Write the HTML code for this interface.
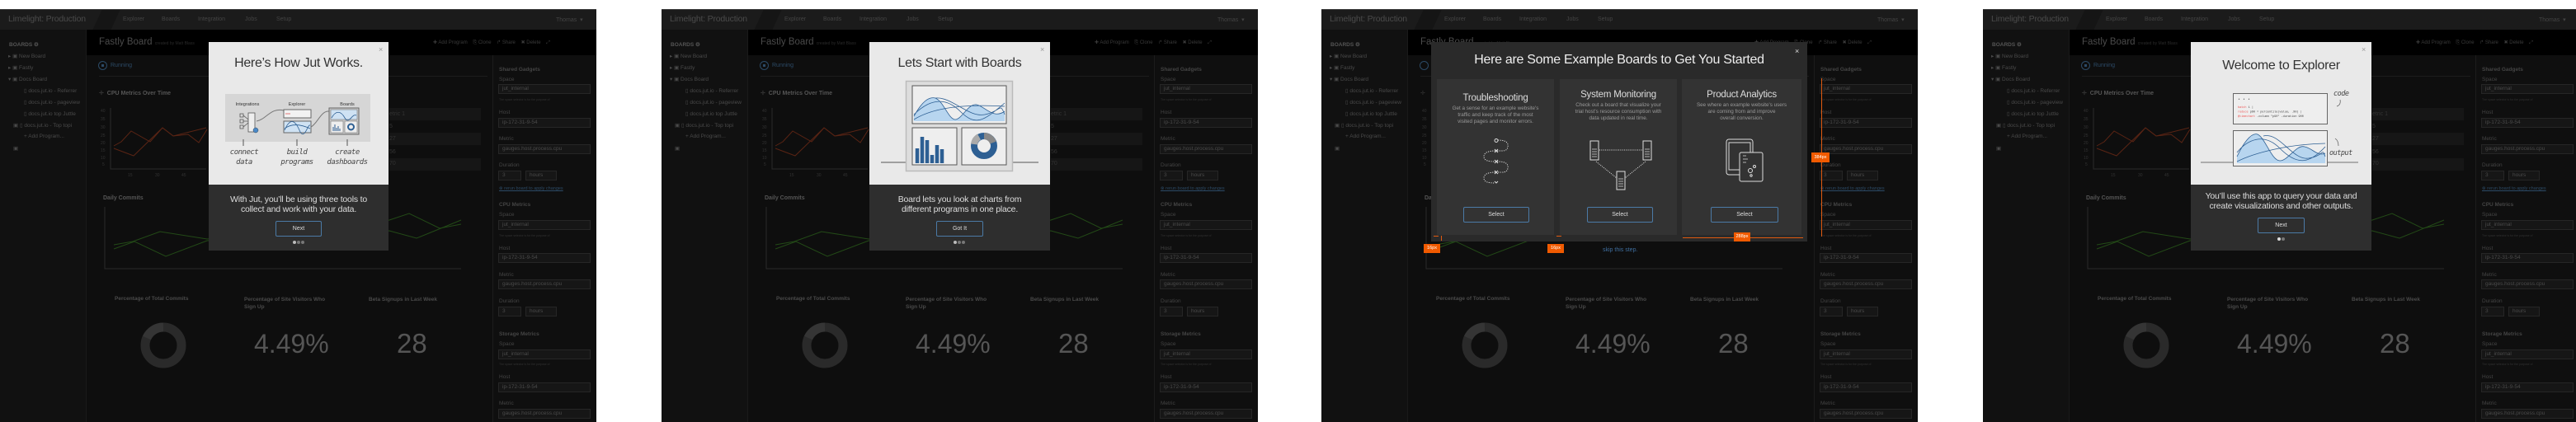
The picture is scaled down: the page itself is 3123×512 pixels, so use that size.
<!DOCTYPE html>
<html><head><meta charset="utf-8">
<style>
*{margin:0;padding:0;box-sizing:border-box}
body{width:3123px;height:512px;background:#fff;position:relative;overflow:hidden;font-family:"Liberation Sans",sans-serif}
.p{position:absolute;top:0;width:723px;height:512px;overflow:hidden}
.a{position:absolute;white-space:nowrap}
.nav{left:0;top:11px;width:723px;height:25px;background:#1b1b1b;border-top:1px solid #3a3a3a}
.side{left:0;top:36px;width:105px;height:476px;background:#111;border-right:1px solid #1a1a1a}
.hdr{left:105px;top:36px;width:618px;height:31px;background:#000}
.main{left:105px;top:67px;width:493px;height:445px;background:#0e0e0e}
.rp{left:597px;top:67px;width:126px;height:445px;background:#0f0f0f;border-left:1px solid #1c1c1c}
.nl{font-size:7px;color:#444;top:20px}
.sb{font-size:6.5px;color:#4a4a4a}
.lab{font-size:6.5px;color:#444;left:605px}
.sel{left:604px;width:112px;height:12px;background:#161616;border:1px solid #262626;font-size:6.5px;color:#4a4a4a;padding-left:4px;line-height:10px}
.hint{font-size:3.5px;color:#333;left:605px}
.row{left:472px;width:111px;height:15px;background:#161616}
.m{position:absolute;overflow:hidden}
.btn{position:absolute;border:1px solid #4b7aa6;border-radius:2px;color:#ddd;font-size:7px;text-align:center}
.dot{position:absolute;width:4px;height:4px;border-radius:2px;background:#777}
.ttl{font-size:16px;color:#333;letter-spacing:-0.3px;text-align:center}
.dk{font-size:10.5px;line-height:12px;color:#ddd;text-align:center;letter-spacing:-0.2px}
.lt{font-size:10.5px;color:#4a4a4a;top:17px;left:10px;letter-spacing:-0.2px}
.fb{left:120px;top:45px;font-size:11.5px;color:#4a4a4a}
.act{left:525px;top:48px;font-size:6px;color:#3a3a3a}
.bt{font-size:6.5px;color:#4a4a4a;font-weight:bold}
</style></head><body>

<!-- ================= PANEL 1 ================= -->
<div class="p" style="left:0">
<div class="a nav"></div>
<div class="a lt">Limelight: Production</div>
<div class="a" style="left:118px;top:12px;width:22px;height:24px;background:#151515;transform:skewX(-25deg)"></div>
<div class="a nl" style="left:149px">Explorer</div><div class="a nl" style="left:196px">Boards</div><div class="a nl" style="left:240px">Integration</div><div class="a nl" style="left:297px">Jobs</div><div class="a nl" style="left:335px">Setup</div>
<div class="a nl" style="left:674px">Thomas &nbsp;▾</div>
<div class="a side"></div>
<div class="a sb" style="left:11px;top:50px;color:#555;font-weight:bold">BOARDS ⚙</div>
<div class="a sb" style="left:10px;top:64px">▸ ▣ New Board</div>
<div class="a sb" style="left:10px;top:78px">▸ ▣ Fastly</div>
<div class="a sb" style="left:10px;top:92px">▾ ▣ Docs Board</div>
<div class="a sb" style="left:29px;top:106px">▯ docs.jut.io - Referrer</div>
<div class="a sb" style="left:29px;top:120px">▯ docs.jut.io - pageview</div>
<div class="a sb" style="left:29px;top:134px">▯ docs.jut.io top Juttle</div>
<div class="a sb" style="left:16px;top:148px">▣ ▯ docs.jut.io - Top topi</div>
<div class="a sb" style="left:29px;top:162px">+ Add Program...</div>
<div class="a sb" style="left:16px;top:176px">▣</div>
<div class="a hdr"></div>
<div class="a fb">Fastly Board <span style="font-size:5px;color:#2a2a2a">created by Matt Blass</span></div>
<div class="a act">✚ Add Program &nbsp;&nbsp; ⎘ Clone &nbsp;&nbsp; ↱ Share &nbsp;&nbsp; ✖ Delete &nbsp;&nbsp; ⤢</div>
<div class="a main"></div>
<div class="a rp"></div>
<div class="a" style="left:119px;top:74px;width:11px;height:11px;border:1px solid #2c4a66;border-radius:6px"></div>
<div class="a" style="left:123px;top:78px;width:3px;height:3px;background:#2c4a66"></div>
<div class="a" style="left:134px;top:76px;font-size:7px;color:#2c4a66">Running</div>
<div class="a" style="left:120px;top:92px;width:471px;height:1px;background:#1c1c1c"></div>
<div class="a bt" style="left:120px;top:109px;font-size:7px;color:#555"><span style="color:#333">✛</span> &nbsp;CPU Metrics Over Time</div>
<div class="a row" style="top:131px"></div><div class="a row" style="top:161px"></div><div class="a row" style="top:192px"></div>
<div class="a" style="left:472px;top:135px;font-size:7px;color:#333">etric 1</div>
<div class="a" style="left:472px;top:150px;font-size:7px;color:#333">5</div>
<div class="a" style="left:472px;top:165px;font-size:7px;color:#333">27</div>
<div class="a" style="left:472px;top:181px;font-size:7px;color:#333">56</div>
<div class="a" style="left:472px;top:195px;font-size:7px;color:#333">70</div>
<div class="a bt" style="left:125px;top:237px;font-size:7px;color:#555">Daily Commits</div>
<svg class="a" style="left:0;top:0" width="723" height="512">
<g font-size="5" fill="#333" font-family="Liberation Sans"><text x="122" y="136">40</text><text x="122" y="146">35</text><text x="122" y="156">30</text><text x="122" y="166">25</text><text x="122" y="175">20</text><text x="122" y="184">15</text><text x="122" y="193">10</text><text x="124" y="201">5</text><text x="155" y="214">15</text><text x="188" y="214">30</text><text x="220" y="214">45</text></g>
<path d="M134 131V205H250" stroke="#2a2a2a" fill="none"/>
<path d="M138 177L147 172L159 159L182 172L197 155L210 165L250 155" stroke="#5a2414" fill="none"/>
<path d="M138 180L162 189L197 155L210 165L228 163L241 173L251 157" stroke="#5a2414" fill="none"/>
<path d="M127 251V326H559" stroke="#2a2a2a" fill="none"/>
<path d="M138 297L161 293L194 281L251 290L472 267L496 259L533 277L559 272" stroke="#234a17" fill="none"/>
<path d="M138 302L163 293L201 311L251 292L472 280L505 289L559 267" stroke="#234a17" fill="none"/>
<circle cx="198" cy="419" r="22" stroke="#2a2a2a" stroke-width="11" fill="none"/>
<path d="M198 397A22 22 0 0 0 178 410" stroke="#353535" stroke-width="11" fill="none"/>
</svg>
<div class="a bt" style="left:139px;top:359px">Percentage of Total Commits</div>
<div class="a bt" style="left:296px;top:360px;line-height:8.5px">Percentage of Site Visitors Who<br>Sign Up</div>
<div class="a bt" style="left:447px;top:360px">Beta Signups in Last Week</div>
<div class="a" style="left:308px;top:399px;font-size:32px;color:#555">4.49%</div>
<div class="a" style="left:481px;top:398px;font-size:33px;color:#555">28</div>
<div class="a lab" style="top:81px;font-weight:bold">Shared Gadgets</div>
<div class="a lab" style="top:93px">Space</div><div class="a sel" style="top:102px">jut_internal</div><div class="a hint" style="top:119px">The space selector is for the purpose of</div>
<div class="a lab" style="top:133px">Host</div><div class="a sel" style="top:143px">ip-172-31-9-54</div>
<div class="a lab" style="top:165px">Metric</div><div class="a sel" style="top:175px">gauges.host.process.cpu</div>
<div class="a lab" style="top:197px">Duration</div><div class="a sel" style="top:207px;width:28px">3</div><div class="a sel" style="top:207px;left:637px;width:38px">hours</div>
<div class="a" style="left:605px;top:226px;font-size:5.5px;color:#2c4a66;text-decoration:underline">⊗ rerun board to apply changes</div>
<div class="a lab" style="top:245px;font-weight:bold">CPU Metrics</div>
<div class="a lab" style="top:257px">Space</div><div class="a sel" style="top:267px">jut_internal</div><div class="a hint" style="top:284px">The space selector is for the purpose of</div>
<div class="a lab" style="top:298px">Host</div><div class="a sel" style="top:307px">ip-172-31-9-54</div>
<div class="a lab" style="top:330px">Metric</div><div class="a sel" style="top:339px">gauges.host.process.cpu</div>
<div class="a lab" style="top:362px">Duration</div><div class="a sel" style="top:372px;width:28px">3</div><div class="a sel" style="top:372px;left:637px;width:38px">hours</div>
<div class="a lab" style="top:402px;font-weight:bold">Storage Metrics</div>
<div class="a lab" style="top:414px">Space</div><div class="a sel" style="top:424px">jut_internal</div><div class="a hint" style="top:440px">The space selector is for the purpose of</div>
<div class="a lab" style="top:454px">Host</div><div class="a sel" style="top:464px">ip-172-31-9-54</div>
<div class="a lab" style="top:486px">Metric</div><div class="a sel" style="top:496px">gauges.host.process.cpu</div>

<div class="m" style="left:253px;top:51px;width:218px;height:173px;background:#e9e9e9"></div>
<div class="m" style="left:253px;top:224px;width:218px;height:80px;background:#2e2e2e"></div>
<div class="a" style="left:459px;top:55px;font-size:9px;color:#999">×</div>
<div class="a ttl" style="left:253px;top:68px;width:218px">Here’s How Jut Works.</div>
<svg class="a" style="left:253px;top:100px" width="218" height="110">
<rect x="20" y="14" width="176" height="58" fill="#d6d6d6"/>
<g font-size="5.5" fill="#333" text-anchor="middle" font-family="Liberation Sans"><text x="47" y="28">Integrations</text><text x="107" y="28">Explorer</text><text x="168" y="28">Boards</text></g>
<path d="M38 38h4v4h-4zM38 45h4v4h-4zM38 52h4v4h-4zM42 40l6 5M42 47h6M42 54l6-5" stroke="#555" fill="none" stroke-width=".8"/>
<rect x="48" y="37" width="8" height="23" fill="#eee" stroke="#555" stroke-width=".8"/>
<circle cx="57" cy="58" r="3" fill="#4a8ac9" stroke="#345" stroke-width=".5"/>
<path d="M58 47C70 45 75 30 91 34" stroke="#777" fill="none"/>
<rect x="91" y="33" width="33" height="10" fill="#f2f2f2" stroke="#666"/>
<path d="M93 38h6" stroke="#d55" stroke-width=".8"/>
<rect x="91" y="47" width="33" height="14" fill="#cfe2f3" stroke="#666"/>
<path d="M92 58C98 44 104 44 110 58S120 50 123 52M92 56C100 50 110 50 123 56" stroke="#2d5f93" fill="none" stroke-width=".8"/>
<path d="M124 54C132 50 136 34 146 35" stroke="#777" fill="none"/>
<rect x="146" y="31" width="36" height="32" fill="#ccc" stroke="#666"/>
<rect x="148" y="33" width="32" height="12" fill="#cfe2f3" stroke="#777" stroke-width=".6"/>
<path d="M149 43C154 34 160 34 165 43S174 37 179 40" stroke="#2d5f93" fill="none" stroke-width=".8"/>
<rect x="148" y="47" width="15" height="14" fill="#eee" stroke="#777" stroke-width=".6"/>
<rect x="165" y="47" width="15" height="14" fill="#eee" stroke="#777" stroke-width=".6"/>
<path d="M151 59v-5M153 59v-8M155 59v-4M157 59v-6M159 59v-3" stroke="#2d5f93"/>
<circle cx="172.5" cy="54" r="3.5" stroke="#2d5f93" stroke-width="2" fill="none"/>
<path d="M42 69v8M107 69v8M168 69v8" stroke="#555"/>
<g font-size="9" fill="#444" text-anchor="middle" font-family="DejaVu Sans Mono,monospace" font-style="italic" letter-spacing="-0.5"><text x="43" y="87">connect</text><text x="43" y="99">data</text><text x="107" y="87">build</text><text x="107" y="99">programs</text><text x="168" y="87">create</text><text x="168" y="99">dashboards</text></g>
</svg>
<div class="a dk" style="left:253px;top:236px;width:218px">With Jut, you’ll be using three tools to<br>collect and work with your data.</div>
<div class="btn" style="left:334px;top:268px;width:56px;height:19px;line-height:17px">Next</div>
<div class="dot" style="left:355px;top:292px;background:#bbb"></div><div class="dot" style="left:360px;top:292px"></div><div class="dot" style="left:365px;top:292px"></div>
</div>

<!-- ================= PANEL 2 ================= -->
<div class="p" style="left:802px">
<div class="a nav"></div>
<div class="a lt">Limelight: Production</div>
<div class="a" style="left:118px;top:12px;width:22px;height:24px;background:#151515;transform:skewX(-25deg)"></div>
<div class="a nl" style="left:149px">Explorer</div><div class="a nl" style="left:196px">Boards</div><div class="a nl" style="left:240px">Integration</div><div class="a nl" style="left:297px">Jobs</div><div class="a nl" style="left:335px">Setup</div>
<div class="a nl" style="left:674px">Thomas &nbsp;▾</div>
<div class="a side"></div>
<div class="a sb" style="left:11px;top:50px;color:#555;font-weight:bold">BOARDS ⚙</div>
<div class="a sb" style="left:10px;top:64px">▸ ▣ New Board</div>
<div class="a sb" style="left:10px;top:78px">▸ ▣ Fastly</div>
<div class="a sb" style="left:10px;top:92px">▾ ▣ Docs Board</div>
<div class="a sb" style="left:29px;top:106px">▯ docs.jut.io - Referrer</div>
<div class="a sb" style="left:29px;top:120px">▯ docs.jut.io - pageview</div>
<div class="a sb" style="left:29px;top:134px">▯ docs.jut.io top Juttle</div>
<div class="a sb" style="left:16px;top:148px">▣ ▯ docs.jut.io - Top topi</div>
<div class="a sb" style="left:29px;top:162px">+ Add Program...</div>
<div class="a sb" style="left:16px;top:176px">▣</div>
<div class="a hdr"></div>
<div class="a fb">Fastly Board <span style="font-size:5px;color:#2a2a2a">created by Matt Blass</span></div>
<div class="a act">✚ Add Program &nbsp;&nbsp; ⎘ Clone &nbsp;&nbsp; ↱ Share &nbsp;&nbsp; ✖ Delete &nbsp;&nbsp; ⤢</div>
<div class="a main"></div>
<div class="a rp"></div>
<div class="a" style="left:119px;top:74px;width:11px;height:11px;border:1px solid #2c4a66;border-radius:6px"></div>
<div class="a" style="left:123px;top:78px;width:3px;height:3px;background:#2c4a66"></div>
<div class="a" style="left:134px;top:76px;font-size:7px;color:#2c4a66">Running</div>
<div class="a" style="left:120px;top:92px;width:471px;height:1px;background:#1c1c1c"></div>
<div class="a bt" style="left:120px;top:109px;font-size:7px;color:#555"><span style="color:#333">✛</span> &nbsp;CPU Metrics Over Time</div>
<div class="a row" style="top:131px"></div><div class="a row" style="top:161px"></div><div class="a row" style="top:192px"></div>
<div class="a" style="left:472px;top:135px;font-size:7px;color:#333">etric 1</div>
<div class="a" style="left:472px;top:150px;font-size:7px;color:#333">5</div>
<div class="a" style="left:472px;top:165px;font-size:7px;color:#333">27</div>
<div class="a" style="left:472px;top:181px;font-size:7px;color:#333">56</div>
<div class="a" style="left:472px;top:195px;font-size:7px;color:#333">70</div>
<div class="a bt" style="left:125px;top:237px;font-size:7px;color:#555">Daily Commits</div>
<svg class="a" style="left:0;top:0" width="723" height="512">
<g font-size="5" fill="#333" font-family="Liberation Sans"><text x="122" y="136">40</text><text x="122" y="146">35</text><text x="122" y="156">30</text><text x="122" y="166">25</text><text x="122" y="175">20</text><text x="122" y="184">15</text><text x="122" y="193">10</text><text x="124" y="201">5</text><text x="155" y="214">15</text><text x="188" y="214">30</text><text x="220" y="214">45</text></g>
<path d="M134 131V205H250" stroke="#2a2a2a" fill="none"/>
<path d="M138 177L147 172L159 159L182 172L197 155L210 165L250 155" stroke="#5a2414" fill="none"/>
<path d="M138 180L162 189L197 155L210 165L228 163L241 173L251 157" stroke="#5a2414" fill="none"/>
<path d="M127 251V326H559" stroke="#2a2a2a" fill="none"/>
<path d="M138 297L161 293L194 281L251 290L472 267L496 259L533 277L559 272" stroke="#234a17" fill="none"/>
<path d="M138 302L163 293L201 311L251 292L472 280L505 289L559 267" stroke="#234a17" fill="none"/>
<circle cx="198" cy="419" r="22" stroke="#2a2a2a" stroke-width="11" fill="none"/>
<path d="M198 397A22 22 0 0 0 178 410" stroke="#353535" stroke-width="11" fill="none"/>
</svg>
<div class="a bt" style="left:139px;top:359px">Percentage of Total Commits</div>
<div class="a bt" style="left:296px;top:360px;line-height:8.5px">Percentage of Site Visitors Who<br>Sign Up</div>
<div class="a bt" style="left:447px;top:360px">Beta Signups in Last Week</div>
<div class="a" style="left:308px;top:399px;font-size:32px;color:#555">4.49%</div>
<div class="a" style="left:481px;top:398px;font-size:33px;color:#555">28</div>
<div class="a lab" style="top:81px;font-weight:bold">Shared Gadgets</div>
<div class="a lab" style="top:93px">Space</div><div class="a sel" style="top:102px">jut_internal</div><div class="a hint" style="top:119px">The space selector is for the purpose of</div>
<div class="a lab" style="top:133px">Host</div><div class="a sel" style="top:143px">ip-172-31-9-54</div>
<div class="a lab" style="top:165px">Metric</div><div class="a sel" style="top:175px">gauges.host.process.cpu</div>
<div class="a lab" style="top:197px">Duration</div><div class="a sel" style="top:207px;width:28px">3</div><div class="a sel" style="top:207px;left:637px;width:38px">hours</div>
<div class="a" style="left:605px;top:226px;font-size:5.5px;color:#2c4a66;text-decoration:underline">⊗ rerun board to apply changes</div>
<div class="a lab" style="top:245px;font-weight:bold">CPU Metrics</div>
<div class="a lab" style="top:257px">Space</div><div class="a sel" style="top:267px">jut_internal</div><div class="a hint" style="top:284px">The space selector is for the purpose of</div>
<div class="a lab" style="top:298px">Host</div><div class="a sel" style="top:307px">ip-172-31-9-54</div>
<div class="a lab" style="top:330px">Metric</div><div class="a sel" style="top:339px">gauges.host.process.cpu</div>
<div class="a lab" style="top:362px">Duration</div><div class="a sel" style="top:372px;width:28px">3</div><div class="a sel" style="top:372px;left:637px;width:38px">hours</div>
<div class="a lab" style="top:402px;font-weight:bold">Storage Metrics</div>
<div class="a lab" style="top:414px">Space</div><div class="a sel" style="top:424px">jut_internal</div><div class="a hint" style="top:440px">The space selector is for the purpose of</div>
<div class="a lab" style="top:454px">Host</div><div class="a sel" style="top:464px">ip-172-31-9-54</div>
<div class="a lab" style="top:486px">Metric</div><div class="a sel" style="top:496px">gauges.host.process.cpu</div>

<div class="m" style="left:252px;top:51px;width:219px;height:173px;background:#e9e9e9"></div>
<div class="m" style="left:252px;top:224px;width:219px;height:80px;background:#2e2e2e"></div>
<div class="a" style="left:459px;top:55px;font-size:9px;color:#999">×</div>
<div class="a ttl" style="left:252px;top:68px;width:219px">Lets Start with Boards</div>
<svg class="a" style="left:252px;top:95px" width="219" height="120">
<path d="M14 102H45M173 102H205" stroke="#555" stroke-width="1"/>
<rect x="44.5" y="3.5" width="129" height="109" fill="#ddd" stroke="#bbb" stroke-width="1.5"/>
<rect x="52" y="9" width="114" height="46" fill="#eee" stroke="#555"/>
<path d="M54 52V46C64 28 72 22 80 24C90 28 96 50 104 50C112 50 120 30 130 32C140 34 150 50 164 40V52Z" fill="#b7d5ef"/>
<path d="M54 46C64 28 72 22 80 24C90 28 96 50 104 50C112 50 120 30 130 32C140 34 150 50 164 40M54 50C70 40 100 30 164 34M54 44C70 28 90 20 110 40S140 50 164 30M80 24C100 22 120 48 140 44S158 28 164 44" stroke="#2d5f93" fill="none" stroke-width=".8"/>
<rect x="52" y="60" width="54" height="45" fill="#eee" stroke="#555"/>
<rect x="112" y="60" width="54" height="45" fill="#eee" stroke="#555"/>
<path d="M58 103V85M64 103V71M70 103V75M76 103V93M82 103V81M88 103V86" stroke="#2d5f93" stroke-width="4.5"/>
<circle cx="139" cy="82" r="12" stroke="#2d5f93" stroke-width="8" fill="none"/>
<path d="M139 70A12 12 0 0 1 150 78" stroke="#888" stroke-width="8" fill="none"/>
<path d="M127 80A12 12 0 0 1 133 71" stroke="#aaa" stroke-width="8" fill="none"/>
</svg>
<div class="a dk" style="left:252px;top:236px;width:219px">Board lets you look at charts from<br>different programs in one place.</div>
<div class="btn" style="left:333px;top:268px;width:57px;height:19px;line-height:17px">Got It</div>
<div class="dot" style="left:354px;top:292px;background:#bbb"></div><div class="dot" style="left:359px;top:292px"></div><div class="dot" style="left:364px;top:292px"></div>
</div>

<!-- ================= PANEL 3 ================= -->
<div class="p" style="left:1602px">
<div class="a nav"></div>
<div class="a lt">Limelight: Production</div>
<div class="a" style="left:118px;top:12px;width:22px;height:24px;background:#151515;transform:skewX(-25deg)"></div>
<div class="a nl" style="left:149px">Explorer</div><div class="a nl" style="left:196px">Boards</div><div class="a nl" style="left:240px">Integration</div><div class="a nl" style="left:297px">Jobs</div><div class="a nl" style="left:335px">Setup</div>
<div class="a nl" style="left:674px">Thomas &nbsp;▾</div>
<div class="a side"></div>
<div class="a sb" style="left:11px;top:50px;color:#555;font-weight:bold">BOARDS ⚙</div>
<div class="a sb" style="left:10px;top:64px">▸ ▣ New Board</div>
<div class="a sb" style="left:10px;top:78px">▸ ▣ Fastly</div>
<div class="a sb" style="left:10px;top:92px">▾ ▣ Docs Board</div>
<div class="a sb" style="left:29px;top:106px">▯ docs.jut.io - Referrer</div>
<div class="a sb" style="left:29px;top:120px">▯ docs.jut.io - pageview</div>
<div class="a sb" style="left:29px;top:134px">▯ docs.jut.io top Juttle</div>
<div class="a sb" style="left:16px;top:148px">▣ ▯ docs.jut.io - Top topi</div>
<div class="a sb" style="left:29px;top:162px">+ Add Program...</div>
<div class="a sb" style="left:16px;top:176px">▣</div>
<div class="a hdr"></div>
<div class="a fb">Fastly Board <span style="font-size:5px;color:#2a2a2a">created by Matt Blass</span></div>
<div class="a act">✚ Add Program &nbsp;&nbsp; ⎘ Clone &nbsp;&nbsp; ↱ Share &nbsp;&nbsp; ✖ Delete &nbsp;&nbsp; ⤢</div>
<div class="a main"></div>
<div class="a rp"></div>
<div class="a" style="left:119px;top:74px;width:11px;height:11px;border:1px solid #2c4a66;border-radius:6px"></div>
<div class="a" style="left:120px;top:92px;width:471px;height:1px;background:#1c1c1c"></div>
<div class="a" style="left:120px;top:109px;font-size:7px;color:#333">✛</div>
<div class="a bt" style="left:125px;top:237px;font-size:7px;color:#555">Da</div>
<svg class="a" style="left:0;top:0" width="723" height="512">
<g font-size="5" fill="#333" font-family="Liberation Sans"><text x="122" y="136">40</text><text x="122" y="146">35</text><text x="122" y="156">30</text><text x="122" y="166">25</text><text x="122" y="175">20</text><text x="122" y="184">15</text><text x="122" y="193">10</text><text x="124" y="201">5</text></g>
<path d="M127 251V326H559" stroke="#2a2a2a" fill="none"/>
<path d="M138 297L161 293L194 281L251 290L472 267L496 259L533 277L559 272" stroke="#234a17" fill="none"/>
<path d="M138 302L163 293L201 311L251 292L472 280L505 289L559 267" stroke="#234a17" fill="none"/>
<circle cx="198" cy="419" r="22" stroke="#2a2a2a" stroke-width="11" fill="none"/>
<path d="M198 397A22 22 0 0 0 178 410" stroke="#353535" stroke-width="11" fill="none"/>
</svg>
<div class="a bt" style="left:139px;top:359px">Percentage of Total Commits</div>
<div class="a bt" style="left:296px;top:360px;line-height:8.5px">Percentage of Site Visitors Who<br>Sign Up</div>
<div class="a bt" style="left:447px;top:360px">Beta Signups in Last Week</div>
<div class="a" style="left:308px;top:399px;font-size:32px;color:#555">4.49%</div>
<div class="a" style="left:481px;top:398px;font-size:33px;color:#555">28</div>
<div class="a lab" style="top:81px;font-weight:bold">Shared Gadgets</div>
<div class="a lab" style="top:93px">Space</div><div class="a sel" style="top:102px">jut_internal</div><div class="a hint" style="top:119px">The space selector is for the purpose of</div>
<div class="a lab" style="top:133px">Host</div><div class="a sel" style="top:143px">ip-172-31-9-54</div>
<div class="a lab" style="top:165px">Metric</div><div class="a sel" style="top:175px">gauges.host.process.cpu</div>
<div class="a lab" style="top:197px">Duration</div><div class="a sel" style="top:207px;width:28px">3</div><div class="a sel" style="top:207px;left:637px;width:38px">hours</div>
<div class="a" style="left:605px;top:226px;font-size:5.5px;color:#2c4a66;text-decoration:underline">⊗ rerun board to apply changes</div>
<div class="a lab" style="top:245px;font-weight:bold">CPU Metrics</div>
<div class="a lab" style="top:257px">Space</div><div class="a sel" style="top:267px">jut_internal</div><div class="a hint" style="top:284px">The space selector is for the purpose of</div>
<div class="a lab" style="top:298px">Host</div><div class="a sel" style="top:307px">ip-172-31-9-54</div>
<div class="a lab" style="top:330px">Metric</div><div class="a sel" style="top:339px">gauges.host.process.cpu</div>
<div class="a lab" style="top:362px">Duration</div><div class="a sel" style="top:372px;width:28px">3</div><div class="a sel" style="top:372px;left:637px;width:38px">hours</div>
<div class="a lab" style="top:402px;font-weight:bold">Storage Metrics</div>
<div class="a lab" style="top:414px">Space</div><div class="a sel" style="top:424px">jut_internal</div><div class="a hint" style="top:440px">The space selector is for the purpose of</div>
<div class="a lab" style="top:454px">Host</div><div class="a sel" style="top:464px">ip-172-31-9-54</div>
<div class="a lab" style="top:486px">Metric</div><div class="a sel" style="top:496px">gauges.host.process.cpu</div>

<div class="m" style="left:133px;top:51px;width:456px;height:242px;background:#2a2a2a"></div>
<div class="a" style="left:574px;top:57px;font-size:9px;color:#ddd">×</div>
<div class="a ttl" style="left:133px;top:64px;width:456px;color:#eee">Here are Some Example Boards to Get You Started</div>
<div class="m" style="left:140px;top:96px;width:142px;height:189px;background:#333"></div>
<div class="m" style="left:289px;top:96px;width:142px;height:189px;background:#333"></div>
<div class="m" style="left:437px;top:96px;width:145px;height:189px;background:#333"></div>
<div class="a" style="left:140px;top:113px;width:142px;text-align:center;font-size:11.5px;color:#ddd;letter-spacing:-0.2px">Troubleshooting</div>
<div class="a" style="left:140px;top:128px;width:142px;text-align:center;font-size:6.3px;line-height:8px;color:#999">Get a sense for an example website's<br>traffic and keep track of the most<br>visited pages and monitor errors.</div>
<div class="a" style="left:289px;top:109px;width:142px;text-align:center;font-size:11.5px;color:#ddd;letter-spacing:-0.2px">System Monitoring</div>
<div class="a" style="left:289px;top:124px;width:142px;text-align:center;font-size:6.3px;line-height:8px;color:#999">Check out a board that visualize your<br>trial host's resource consumption with<br>data updated in real time.</div>
<div class="a" style="left:437px;top:109px;width:145px;text-align:center;font-size:11.5px;color:#ddd;letter-spacing:-0.2px">Product Analytics</div>
<div class="a" style="left:437px;top:124px;width:145px;text-align:center;font-size:6.3px;line-height:8px;color:#999">See where an example website's users<br>are coming from and  improve<br>overall conversion.</div>
<svg class="a" style="left:0;top:0" width="723" height="512">
<g stroke="#ddd" fill="none" stroke-width="1">
<circle cx="212" cy="170.5" r="2"/>
<path d="M214 170C222 170 227 172 226 178S220 183 213 183M211 183C203 183 197 185 197 190S203 196 211 196M213 196C222 196 227 198 226 204S220 209 213 209M211 209C203 209 197 211 197 216S203 222 210 222" stroke-dasharray="1.2 1.4"/>
<path d="M210 181l4 4M214 181l-4 4M210 194l4 4M214 194l-4 4M210 207l4 4M214 207l-4 4M210 220l2 2 2-2"/>
<rect x="326" y="171" width="10" height="23"/><rect x="390" y="171" width="10" height="23"/><rect x="358" y="208" width="10" height="22"/>
<path d="M328 181h6M328 184h6M328 187h6M328 190h6M392 181h6M392 184h6M392 187h6M392 190h6M360 217h6M360 220h6M360 223h6M360 226h6" stroke-width=".8"/>
<path d="M337 182H389M333 196L358 216M393 196L368 216" stroke-dasharray="1 1.3"/>
<rect x="491" y="169" width="32" height="43" rx="3"/><rect x="494" y="173" width="26" height="33"/>
<rect x="507" y="185" width="28" height="35" rx="2" fill="#333"/>
<path d="M511 189h4M511 193h6M511 197h4" stroke-width=".8"/>
<circle cx="520" cy="207" r="2.5"/><circle cx="525" cy="202" r="1.5"/><circle cx="521" cy="213" r="1.2"/>
</g>
</svg>
<div class="btn" style="left:172px;top:251px;width:80px;height:19px;line-height:17px">Select</div>
<div class="btn" style="left:322px;top:251px;width:80px;height:19px;line-height:17px">Select</div>
<div class="btn" style="left:472px;top:251px;width:82px;height:19px;line-height:17px">Select</div>
<div class="a" style="left:606px;top:95px;width:1px;height:192px;background:#e05a10"></div>
<div class="a" style="left:594px;top:185px;width:22px;height:12px;background:#f05a00;font-size:5.5px;color:#fff;line-height:12px;text-align:center">384px</div>
<div class="a" style="left:438px;top:288px;width:146px;height:1px;background:#e05a10"></div>
<div class="a" style="left:500px;top:282px;width:20px;height:11px;background:#f05a00;font-size:5.5px;color:#fff;line-height:11px;text-align:center">288px</div>
<div class="a" style="left:136px;top:286px;width:6px;height:1px;background:#e05a10"></div>
<div class="a" style="left:145px;top:286px;width:1px;height:6px;background:#e05a10"></div>
<div class="a" style="left:285px;top:286px;width:6px;height:1px;background:#e05a10"></div>
<div class="a" style="left:124px;top:296px;width:20px;height:11px;background:#f05a00;font-size:5.5px;color:#fff;line-height:11px;text-align:center">16px</div>
<div class="a" style="left:274px;top:296px;width:20px;height:11px;background:#f05a00;font-size:5.5px;color:#fff;line-height:11px;text-align:center">16px</div>
<div class="a" style="left:341px;top:300px;font-size:7px;color:#3f6e9e">skip this step.</div>
</div>

<!-- ================= PANEL 4 ================= -->
<div class="p" style="left:2404px">
<div class="a nav"></div>
<div class="a lt">Limelight: Production</div>
<div class="a" style="left:118px;top:12px;width:22px;height:24px;background:#151515;transform:skewX(-25deg)"></div>
<div class="a nl" style="left:149px">Explorer</div><div class="a nl" style="left:196px">Boards</div><div class="a nl" style="left:240px">Integration</div><div class="a nl" style="left:297px">Jobs</div><div class="a nl" style="left:335px">Setup</div>
<div class="a nl" style="left:674px">Thomas &nbsp;▾</div>
<div class="a side"></div>
<div class="a sb" style="left:11px;top:50px;color:#555;font-weight:bold">BOARDS ⚙</div>
<div class="a sb" style="left:10px;top:64px">▸ ▣ New Board</div>
<div class="a sb" style="left:10px;top:78px">▸ ▣ Fastly</div>
<div class="a sb" style="left:10px;top:92px">▾ ▣ Docs Board</div>
<div class="a sb" style="left:29px;top:106px">▯ docs.jut.io - Referrer</div>
<div class="a sb" style="left:29px;top:120px">▯ docs.jut.io - pageview</div>
<div class="a sb" style="left:29px;top:134px">▯ docs.jut.io top Juttle</div>
<div class="a sb" style="left:16px;top:148px">▣ ▯ docs.jut.io - Top topi</div>
<div class="a sb" style="left:29px;top:162px">+ Add Program...</div>
<div class="a sb" style="left:16px;top:176px">▣</div>
<div class="a hdr"></div>
<div class="a fb">Fastly Board <span style="font-size:5px;color:#2a2a2a">created by Matt Blass</span></div>
<div class="a act">✚ Add Program &nbsp;&nbsp; ⎘ Clone &nbsp;&nbsp; ↱ Share &nbsp;&nbsp; ✖ Delete &nbsp;&nbsp; ⤢</div>
<div class="a main"></div>
<div class="a rp"></div>
<div class="a" style="left:119px;top:74px;width:11px;height:11px;border:1px solid #2c4a66;border-radius:6px"></div>
<div class="a" style="left:123px;top:78px;width:3px;height:3px;background:#2c4a66"></div>
<div class="a" style="left:134px;top:76px;font-size:7px;color:#2c4a66">Running</div>
<div class="a" style="left:120px;top:92px;width:471px;height:1px;background:#1c1c1c"></div>
<div class="a bt" style="left:120px;top:109px;font-size:7px;color:#555"><span style="color:#333">✛</span> &nbsp;CPU Metrics Over Time</div>
<div class="a row" style="top:131px"></div><div class="a row" style="top:161px"></div><div class="a row" style="top:192px"></div>
<div class="a" style="left:472px;top:135px;font-size:7px;color:#333">etric 1</div>
<div class="a" style="left:472px;top:150px;font-size:7px;color:#333">5</div>
<div class="a" style="left:472px;top:165px;font-size:7px;color:#333">27</div>
<div class="a" style="left:472px;top:181px;font-size:7px;color:#333">56</div>
<div class="a" style="left:472px;top:195px;font-size:7px;color:#333">70</div>
<div class="a bt" style="left:125px;top:237px;font-size:7px;color:#555">Daily Commits</div>
<svg class="a" style="left:0;top:0" width="723" height="512">
<g font-size="5" fill="#333" font-family="Liberation Sans"><text x="122" y="136">40</text><text x="122" y="146">35</text><text x="122" y="156">30</text><text x="122" y="166">25</text><text x="122" y="175">20</text><text x="122" y="184">15</text><text x="122" y="193">10</text><text x="124" y="201">5</text><text x="155" y="214">15</text><text x="188" y="214">30</text><text x="220" y="214">45</text></g>
<path d="M134 131V205H250" stroke="#2a2a2a" fill="none"/>
<path d="M138 177L147 172L159 159L182 172L197 155L210 165L250 155" stroke="#5a2414" fill="none"/>
<path d="M138 180L162 189L197 155L210 165L228 163L241 173L251 157" stroke="#5a2414" fill="none"/>
<path d="M127 251V326H559" stroke="#2a2a2a" fill="none"/>
<path d="M138 297L161 293L194 281L251 290L472 267L496 259L533 277L559 272" stroke="#234a17" fill="none"/>
<path d="M138 302L163 293L201 311L251 292L472 280L505 289L559 267" stroke="#234a17" fill="none"/>
<circle cx="198" cy="419" r="22" stroke="#2a2a2a" stroke-width="11" fill="none"/>
<path d="M198 397A22 22 0 0 0 178 410" stroke="#353535" stroke-width="11" fill="none"/>
</svg>
<div class="a bt" style="left:139px;top:359px">Percentage of Total Commits</div>
<div class="a bt" style="left:296px;top:360px;line-height:8.5px">Percentage of Site Visitors Who<br>Sign Up</div>
<div class="a bt" style="left:447px;top:360px">Beta Signups in Last Week</div>
<div class="a" style="left:308px;top:399px;font-size:32px;color:#555">4.49%</div>
<div class="a" style="left:481px;top:398px;font-size:33px;color:#555">28</div>
<div class="a lab" style="top:81px;font-weight:bold">Shared Gadgets</div>
<div class="a lab" style="top:93px">Space</div><div class="a sel" style="top:102px">jut_internal</div><div class="a hint" style="top:119px">The space selector is for the purpose of</div>
<div class="a lab" style="top:133px">Host</div><div class="a sel" style="top:143px">ip-172-31-9-54</div>
<div class="a lab" style="top:165px">Metric</div><div class="a sel" style="top:175px">gauges.host.process.cpu</div>
<div class="a lab" style="top:197px">Duration</div><div class="a sel" style="top:207px;width:28px">3</div><div class="a sel" style="top:207px;left:637px;width:38px">hours</div>
<div class="a" style="left:605px;top:226px;font-size:5.5px;color:#2c4a66;text-decoration:underline">⊗ rerun board to apply changes</div>
<div class="a lab" style="top:245px;font-weight:bold">CPU Metrics</div>
<div class="a lab" style="top:257px">Space</div><div class="a sel" style="top:267px">jut_internal</div><div class="a hint" style="top:284px">The space selector is for the purpose of</div>
<div class="a lab" style="top:298px">Host</div><div class="a sel" style="top:307px">ip-172-31-9-54</div>
<div class="a lab" style="top:330px">Metric</div><div class="a sel" style="top:339px">gauges.host.process.cpu</div>
<div class="a lab" style="top:362px">Duration</div><div class="a sel" style="top:372px;width:28px">3</div><div class="a sel" style="top:372px;left:637px;width:38px">hours</div>
<div class="a lab" style="top:402px;font-weight:bold">Storage Metrics</div>
<div class="a lab" style="top:414px">Space</div><div class="a sel" style="top:424px">jut_internal</div><div class="a hint" style="top:440px">The space selector is for the purpose of</div>
<div class="a lab" style="top:454px">Host</div><div class="a sel" style="top:464px">ip-172-31-9-54</div>
<div class="a lab" style="top:486px">Metric</div><div class="a sel" style="top:496px">gauges.host.process.cpu</div>

<div class="m" style="left:252px;top:51px;width:219px;height:173px;background:#e9e9e9"></div>
<div class="m" style="left:252px;top:224px;width:219px;height:80px;background:#2e2e2e"></div>
<div class="a" style="left:459px;top:55px;font-size:9px;color:#999">×</div>
<div class="a ttl" style="left:252px;top:71px;width:219px">Welcome to Explorer</div>
<svg class="a" style="left:0;top:0" width="723" height="512">
<path d="M264 197H455" stroke="#999" stroke-width="1.5"/>
<rect x="303.5" y="113.5" width="114" height="37" fill="#eee" stroke="#666"/>
<text x="309" y="122" font-size="5" fill="#666" font-family="Liberation Mono">• • •</text>
<g font-size="3.5" font-family="Liberation Mono" fill="#444"><text x="309" y="131"><tspan fill="#e55">batch</tspan> 1 |</text><text x="309" y="136.5"><tspan fill="#e55">reduce</tspan> p90 = percentile(value, .90) |</text><text x="309" y="142"><tspan fill="#e55">@timechart</tspan> -column "p90" -duration 900</text></g>
<rect x="303.5" y="158.5" width="114" height="43" fill="#eee" stroke="#666"/>
<path d="M308 198V190C315 175 325 160 333 163C342 167 350 195 360 195C370 195 380 175 390 178C400 180 405 190 415 186V198Z" fill="#b7d5ef"/>
<path d="M308 190C315 175 325 160 333 163C342 167 350 195 360 195C370 195 380 175 390 178C400 180 405 190 415 186M308 196C330 185 370 175 415 174M308 185C320 170 340 160 360 180S395 200 415 178M340 165C360 160 375 195 395 192S410 178 415 190" stroke="#2d5f93" fill="none" stroke-width=".8"/>
<g font-size="8.5" fill="#444" font-family="DejaVu Sans Mono,monospace" font-style="italic" letter-spacing="-0.5"><text x="425" y="116">code</text><text x="420" y="188">output</text></g>
<path d="M433 121C434 126 432 128 429 129M427 168C430 170 431 174 431 177" stroke="#555" fill="none" stroke-width=".7"/>
</svg>
<div class="a dk" style="left:252px;top:232px;width:219px">You’ll use this app to query your data and<br>create visualizations and other outputs.</div>
<div class="btn" style="left:333px;top:264px;width:57px;height:19px;line-height:17px">Next</div>
<div class="dot" style="left:357px;top:288px;background:#ddd"></div><div class="dot" style="left:362px;top:288px"></div>
</div>
</body></html>
